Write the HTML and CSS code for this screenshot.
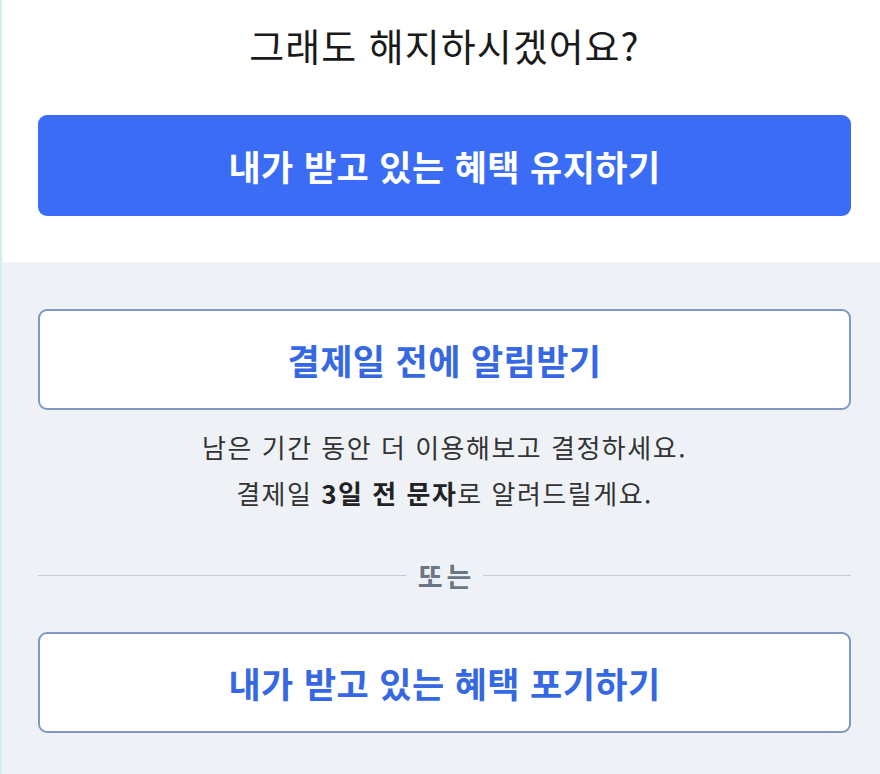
FILE: index.html
```html
<!DOCTYPE html>
<html lang="ko">
<head>
    <meta charset="UTF-8">
    <meta name="viewport" content="width=device-width, initial-scale=1.0">
    <title>해지 확인</title>
    <link rel="stylesheet" href="styles.css">
</head>
<body>
    <div class="page">
        <div class="top">
            <h1>그래도 해지하시겠어요?</h1>
            <button class="btn btn-primary">내가 받고 있는 혜택 유지하기</button>
        </div>
        <div class="bottom">
            <button class="btn btn-outline">결제일 전에 알림받기</button>
            <p class="note">남은 기간 동안 더 이용해보고 결정하세요.<br>결제일 <strong>3일 전 문자</strong>로 알려드릴게요.</p>
            <div class="divider"><span>또는</span></div>
            <button class="btn btn-outline btn-last">내가 받고 있는 혜택 포기하기</button>
        </div>
    </div>
</body>
</html>
```

FILE: styles.css
```css
body {
    margin: 0;
    font-family: "Noto Sans CJK KR", "Noto Sans", sans-serif;
    color: #222;
}

.page {
    border-left: 2px solid #d3eef0;
    min-height: 774px;
    background-color: #eef2f6;
}

.top {
    background-color: #fff;
    padding: 20px 29px 46px 36px;
}

h1 {
    margin: 0;
    font-size: 38px;
    font-weight: 400;
    line-height: 50px;
    letter-spacing: 1px;
    text-align: center;
    color: #1a1a1a;
}

.btn {
    display: block;
    width: 100%;
    height: 101px;
    font-family: inherit;
    font-size: 35px;
    font-weight: 700;
    letter-spacing: 0.4px;
    border-radius: 9px;
    cursor: pointer;
}

.btn-primary {
    margin-top: 45px;
    background-color: #3a6cf6;
    color: #fff;
    border: none;
}

.bottom {
    padding: 47px 29px 41px 36px;
}

.btn-outline {
    background-color: #fff;
    color: #3568e2;
    border: 2px solid #7f98c4;
}

.note {
    margin: 14px 0 0;
    font-size: 26px;
    line-height: 46px;
    letter-spacing: 1.5px;
    text-align: center;
    color: #333;
}

.note strong {
    color: #222;
}

.divider {
    display: flex;
    align-items: center;
    gap: 12px;
    height: 38px;
    margin-top: 40px;
    color: #6b7684;
    font-size: 27px;
    font-weight: 700;
}

.divider span {
    letter-spacing: 4px;
    margin-right: -4px;
}

.divider::before,
.divider::after {
    content: "";
    flex: 1;
    height: 1px;
    background-color: #c9cdd3;
}

.btn-last {
    margin-top: 38px;
}
```
